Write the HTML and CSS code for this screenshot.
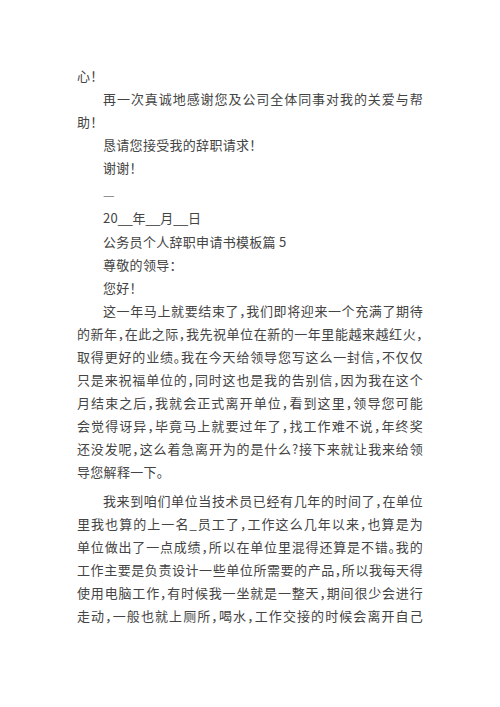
FILE: index.html
```html
<!DOCTYPE html>
<html lang="zh-CN">
<head>
<meta charset="utf-8">
<title>公务员个人辞职申请书模板篇 5</title>
<link rel="stylesheet" href="styles.css">
</head>
<body>
<main class="page">
  <p class="para"><span class="ln">心！</span></p>
  <p class="para indent"><span class="ln j">再一次真诚地感谢您及公司全体同事对我的关爱与帮</span><span class="ln out">助！</span></p>
  <p class="para indent"><span class="ln">恳请您接受我的辞职请求！</span></p>
  <p class="para indent"><span class="ln">谢谢！</span></p>
  <p class="para indent dash"><span class="ln">—</span></p>
  <p class="para indent"><span class="ln">20<span class="lat">__</span>年<span class="lat">__</span>月<span class="lat">__</span>日</span></p>
  <p class="para indent"><span class="ln">公务员个人辞职申请书模板篇 5</span></p>
  <p class="para indent"><span class="ln">尊敬的领导：</span></p>
  <p class="para indent"><span class="ln">您好！</span></p>
  <p class="para indent">
    <span class="ln j">这一年马上就要结束了，我们即将迎来一个充满了期待</span>
    <span class="ln j out">的新年，在此之际，我先祝单位在新的一年里能越来越红火，</span>
    <span class="ln j out">取得更好的业绩。我在今天给领导您写这么一封信，不仅仅</span>
    <span class="ln j out">只是来祝福单位的，同时这也是我的告别信，因为我在这个</span>
    <span class="ln j out">月结束之后，我就会正式离开单位，看到这里，领导您可能</span>
    <span class="ln j out">会觉得讶异，毕竟马上就要过年了，找工作难不说，年终奖</span>
    <span class="ln j out">还没发呢，这么着急离开为的是什么?接下来就让我来给领</span>
    <span class="ln out">导您解释一下。</span>
  </p>
  <p class="para indent gap">
    <span class="ln j">我来到咱们单位当技术员已经有几年的时间了，在单位</span>
    <span class="ln j out">里我也算的上一名_员工了，工作这么几年以来，也算是为</span>
    <span class="ln j out">单位做出了一点成绩，所以在单位里混得还算是不错。我的</span>
    <span class="ln j out">工作主要是负责设计一些单位所需要的产品，所以我每天得</span>
    <span class="ln j out">使用电脑工作，有时候我一坐就是一整天，期间很少会进行</span>
    <span class="ln j out">走动，一般也就上厕所，喝水，工作交接的时候会离开自己</span>
  </p>
</main>
</body>
</html>
```
FILE: styles.css
```css
html, body {
  margin: 0;
  padding: 0;
  background: #ffffff;
}

.page {
  width: 346px;
  padding: 64px 77px 0 77px;
  font-family: "Noto Sans CJK SC", "Noto Sans CJK JP", sans-serif;
  font-size: 13px;
  line-height: 23px;
  color: #444444;
  letter-spacing: 0.3px;
  font-feature-settings: "halt";
}

.para {
  margin: 0;
}

.indent {
  padding-left: 26px;
}

.indent .out {
  margin-left: -26px;
}

.ln {
  display: block;
  white-space: nowrap;
}

.ln.j {
  white-space: normal;
  text-align: justify;
  text-align-last: justify;
}

.lat {
  font-family: "Liberation Sans", sans-serif;
  letter-spacing: 0;
}

.dash {
  padding-top: 4px;
  color: #777777;
}

.gap {
  margin-top: 6px;
}
```
